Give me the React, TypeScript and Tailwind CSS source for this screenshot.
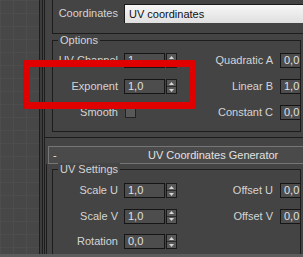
import React from 'react';

const line = 'border-[#1d1d1d]';

function Spinner() {
  return (
    <div className="flex h-[15px] w-[11px] flex-col border border-[#1a1a1a] bg-[#575757]">
      <div className="flex flex-1 items-center justify-center border-b border-[#2c2c2c]">
        <svg width="5" height="3" viewBox="0 0 5 3">
          <path d="M2.5 0L5 3H0z" fill="#d6d6d6" />
        </svg>
      </div>
      <div className="flex flex-1 items-center justify-center">
        <svg width="5" height="3" viewBox="0 0 5 3">
          <path d="M0 0H5L2.5 3z" fill="#d6d6d6" />
        </svg>
      </div>
    </div>
  );
}

function Row({
  label,
  value,
  rLabel,
  rValue,
  checkbox,
}: {
  label: string;
  value?: string;
  rLabel?: string;
  rValue?: string;
  checkbox?: boolean;
}) {
  return (
    <div className="flex h-[15px] shrink-0 items-center">
      <span className="w-[65px] whitespace-nowrap text-right">{label}</span>
      <div className="flex w-[59px] items-center pl-[6px]">
        {checkbox ? (
          <div className="ml-px h-[11px] w-[11px] border border-[#232323] bg-[#585858]" />
        ) : (
          <>
            <div className="flex h-[15px] w-[41px] items-center border border-[#151515] bg-[#4d4d4d] pl-[3px] text-[#e0e0e0]">
              {value}
            </div>
            <div className="ml-px">
              <Spinner />
            </div>
          </>
        )}
      </div>
      {rLabel && (
        <>
          <span className="w-[96px] whitespace-nowrap text-right">{rLabel}</span>
          <div className="ml-[7px] flex h-[15px] flex-1 items-center border border-r-0 border-[#151515] bg-[#4d4d4d] pl-[3px] text-[#e0e0e0]">
            {rValue}
          </div>
        </>
      )}
    </div>
  );
}

function GroupLabel({ children }: { children: React.ReactNode }) {
  return (
    <div className="-mt-[7px] ml-[5px] h-[13px] shrink-0 self-start bg-[#444444] px-[2px] leading-[13px]">
      {children}
    </div>
  );
}

export default function App() {
  return (
    <div className="relative flex h-[257px] w-[303px] flex-col overflow-hidden bg-[#444444] text-[11px] leading-[13px] text-[#d4d4d4] [font-family:'Liberation_Sans',Arial,sans-serif]">
      <div className="flex h-[254px] shrink-0 overflow-hidden">
        {/* ── viewport edge ─────────────────────────── */}
        <div className="w-[39px] bg-[#474747] bg-[linear-gradient(to_right,#4d4d4d_1px,transparent_1px),linear-gradient(to_bottom,#4d4d4d_1px,transparent_1px)] bg-[size:13px_13px]" />
        <div className="w-px bg-[#1d1d1d]" />
        <div className="w-[2px] bg-[#3c3c3c]" />
        <div className="w-px bg-[#1d1d1d]" />
        <div className="w-px bg-[#434343]" />

        {/* ── command panel ─────────────────────────── */}
        <div className={`flex flex-1 flex-col border-l ${line}`}>
          {/* top rollout */}
          <div className={`h-[138px] shrink-0 border-b pl-[7px] ${line}`}>
            <div className={`flex h-[34px] border-b border-l pt-[4px] ${line}`}>
              <div className="flex h-[19px] flex-1 items-center">
                <span className="w-[65px] text-right">Coordinates</span>
                <div className="ml-[6px] flex h-[19px] flex-1 items-center border-l border-t border-[#1a1a1a] bg-[linear-gradient(to_bottom,#f6f6f6,#e0e0e0)] pl-[4px] text-[#101010]">
                  UV coordinates
                </div>
              </div>
            </div>

            <div className={`mr-[2px] mt-[6px] flex h-[92px] flex-col border ${line}`}>
              <GroupLabel>Options</GroupLabel>
              <div className="mt-[6px] flex flex-col gap-[11px]">
                <Row label="UV Channel" value="1" rLabel="Quadratic A" rValue="0,0" />
                <Row label="Exponent" value="1,0" rLabel="Linear B" rValue="1,0" />
                <Row label="Smooth" checkbox rLabel="Constant C" rValue="0,0" />
              </div>
            </div>
          </div>

          {/* rollout header */}
          <div className="-mr-[6px] ml-[3px] mt-[8px] flex h-[18px] shrink-0 items-center border border-[#767676] bg-[#4a4a4a] pl-[4px] text-[#e2e2e2]">
            <span className="w-[95px]">-</span>
            <span>UV Coordinates Generator</span>
          </div>

          {/* bottom rollout */}
          <div className={`ml-px min-h-0 flex-1 border-l pl-[5px] ${line}`}>
            <div className={`mr-[2px] mt-[5px] flex h-[120px] flex-col border ${line}`}>
              <GroupLabel>UV Settings</GroupLabel>
              <div className="mt-[7px] flex flex-col gap-[10.5px]">
                <Row label="Scale U" value="1,0" rLabel="Offset U" rValue="0,0" />
                <Row label="Scale V" value="1,0" rLabel="Offset V" rValue="0,0" />
                <Row label="Rotation" value="0,0" />
              </div>
            </div>
          </div>
        </div>
      </div>
      <div className="h-[3px] shrink-0 bg-[#5c5c5c]" />

      {/* ── red annotation frame ─────────────────── */}
      <div className="pointer-events-none absolute left-[23px] top-[60px] h-[49px] w-[173px] rounded-[3px] border-[7px] border-[#e00000]" />
    </div>
  );
}
